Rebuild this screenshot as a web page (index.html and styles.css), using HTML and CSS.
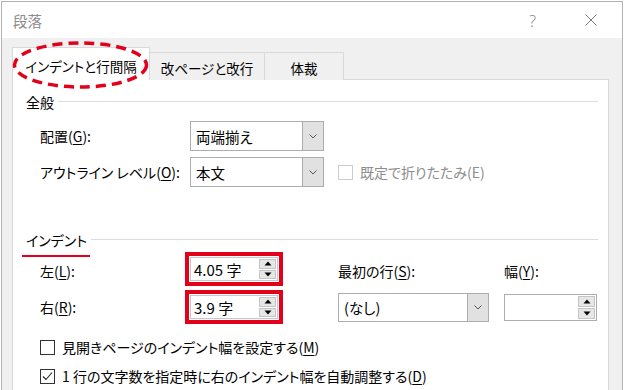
FILE: index.html
```html
<!DOCTYPE html>
<html lang="ja">
<head>
<meta charset="utf-8">
<title>段落</title>
<link rel="stylesheet" href="styles.css">
</head>
<body>
<div class="window">
  <div class="titlebar">
    <span class="title">段落</span>
    <span class="help">?</span>
    <svg class="close" width="12" height="12" viewBox="0 0 12 12"><path d="M0.5 0.5L11.5 11.5M11.5 0.5L0.5 11.5" stroke="#7a7a7a" stroke-width="1" fill="none"/></svg>
  </div>
  <div class="content">
    <div class="tabs">
      <div class="tab active">インデントと行間隔</div>
      <div class="tab t2">改ページと改行</div>
      <div class="tab t3">体裁</div>
    </div>
    <div class="panel">
      <div class="group-head"><span class="gl">全般</span></div>
      <div class="frow r1">
        <span class="lbl">配置(<u>G</u>):</span>
        <div class="combo c1"><span class="ctext">両端揃え</span><span class="cbtn"><svg width="8" height="5" viewBox="0 0 8 5"><path d="M0.5 0.5L4 4L7.5 0.5" stroke="#555" fill="none"/></svg></span></div>
      </div>
      <div class="frow r2">
        <span class="lbl">アウトライン レベル(<u>O</u>):</span>
        <div class="combo c1"><span class="ctext">本文</span><span class="cbtn"><svg width="8" height="5" viewBox="0 0 8 5"><path d="M0.5 0.5L4 4L7.5 0.5" stroke="#555" fill="none"/></svg></span></div>
        <span class="chk disabled"><span class="box"></span><span class="ctl">既定で折りたたみ(E)</span></span>
      </div>

      <div class="group-head g2"><span class="gl ul">インデント</span></div>
      <div class="igrid">
        <span class="lbl l1">左(<u>L</u>):</span>
        <div class="redbox"><div class="spin"><span class="stext">4.05 字</span><span class="sbtns"><span class="sb"><svg width="8" height="5" viewBox="0 0 8 5"><path d="M0.5 4.5L4 0.5L7.5 4.5Z" fill="#000"/></svg></span><span class="sb"><svg width="8" height="5" viewBox="0 0 8 5"><path d="M0.5 0.5L4 4.5L7.5 0.5Z" fill="#000"/></svg></span></span></div></div>
        <span class="lbl l1">最初の行(<u>S</u>):</span>
        <span class="lbl l1">幅(<u>Y</u>):</span>

        <span class="lbl">右(<u>R</u>):</span>
        <div class="redbox"><div class="spin"><span class="stext">3.9 字</span><span class="sbtns"><span class="sb"><svg width="8" height="5" viewBox="0 0 8 5"><path d="M0.5 4.5L4 0.5L7.5 4.5Z" fill="#000"/></svg></span><span class="sb"><svg width="8" height="5" viewBox="0 0 8 5"><path d="M0.5 0.5L4 4.5L7.5 0.5Z" fill="#000"/></svg></span></span></div></div>
        <div class="combo c2"><span class="ctext">(なし)</span><span class="cbtn"><svg width="8" height="5" viewBox="0 0 8 5"><path d="M0.5 0.5L4 4L7.5 0.5" stroke="#555" fill="none"/></svg></span></div>
        <div class="spin sw"><span class="stext"></span><span class="sbtns"><span class="sb"><svg width="8" height="5" viewBox="0 0 8 5"><path d="M0.5 4.5L4 0.5L7.5 4.5Z" fill="#000"/></svg></span><span class="sb"><svg width="8" height="5" viewBox="0 0 8 5"><path d="M0.5 0.5L4 4.5L7.5 0.5Z" fill="#000"/></svg></span></span></div>
      </div>

      <div class="chkrows">
        <span class="chk"><span class="box"></span><span class="ctl">見開きページのインデント幅を設定する(<u>M</u>)</span></span>
        <span class="chk"><span class="box checked"><svg width="13" height="13" viewBox="0 0 13 13"><path d="M2 6.5L5 9.5L11 2.5" stroke="#222" stroke-width="1.1" fill="none"/></svg></span><span class="ctl">1 行の文字数を指定時に右のインデント幅を自動調整する(<u>D</u>)</span></span>
      </div>
    </div>
  </div>
</div>
<svg class="ellipse" width="150" height="56" viewBox="0 0 150 56"><ellipse cx="72.5" cy="27" rx="66" ry="22" fill="none" stroke="#e2001a" stroke-width="3.5" stroke-dasharray="10 6"/></svg>
</body>
</html>
```
FILE: styles.css
```css
html, body {
  margin: 0;
  padding: 0;
}
body {
  width: 625px;
  height: 390px;
  overflow: hidden;
  position: relative;
  background: #fff;
  font-family: "Noto Sans CJK JP", "Noto Sans", sans-serif;
  font-feature-settings: "palt";
  font-size: 14px;
  color: #000;
}
u {
  text-decoration-thickness: 1px;
  text-underline-offset: 2px;
}
.window {
  margin: 1px 0 0 1px;
  width: 620px;
  height: 420px;
  border: 1px solid #b4b4b4;
  border-bottom: none;
  background: #f0f0f0;
}
.titlebar {
  height: 36px;
  background: #fff;
  display: flex;
  align-items: center;
}
.title {
  margin-left: 11px;
  color: #8c8c8c;
  font-size: 14.5px;
  flex: 1;
}
.help {
  font-family: "Noto Sans", sans-serif;
  font-weight: 300;
  color: #8a8a8a;
  font-size: 16px;
  margin-right: 49px;
  margin-top: 1px;
}
.close {
  margin-right: 25px;
  margin-top: -1px;
}
.content {
  padding: 10px 13px 0 10px;
}
.tabs {
  display: flex;
  align-items: flex-end;
  height: 32px;
  position: relative;
  z-index: 1;
  margin-bottom: -1px;
}
.tab {
  box-sizing: border-box;
  height: 28px;
  border: 1px solid #d9d9d9;
  border-bottom: none;
  background: #f0f0f0;
  display: flex;
  align-items: center;
  justify-content: center;
  padding-top: 2px;
  margin-left: -1px;
  font-size: 13.5px;
}
.tab.active {
  height: 33px;
  width: 138px;
  background: #fff;
  margin-left: 0;
  padding-top: 4px;
}
.tab.t2 { width: 116px; }
.tab.t3 { width: 80px; }
.panel {
  background: #fff;
  border: 1px solid #d9d9d9;
  height: 330px;
  padding: 12px 10px 0 13px;
  box-sizing: border-box;
}
.group-head {
  height: 20px;
  line-height: 20px;
  display: flex;
  align-items: center;
  position: relative;
}
.group-head::after {
  content: "";
  flex: 1;
  height: 1px;
  background: #dcdcdc;
  margin-left: 4px;
  margin-top: -2px;
}
.gl { position: relative; }
.gl.ul::after {
  content: "";
  position: absolute;
  left: -4px;
  right: -3px;
  bottom: -7px;
  height: 2px;
  background: #e2001a;
}
.g2 { margin-top: 43px; }
.frow {
  display: flex;
  align-items: center;
  height: 30px;
}
.r1 { margin-top: 9px; }
.r2 { margin-top: 6px; }
.frow .lbl {
  margin-left: 14px;
  width: 150px;
}
.combo {
  box-sizing: border-box;
  display: flex;
  border: 1px solid #adadad;
  background: #fff;
  height: 30px;
}
.combo.c1 { width: 134px; }
.combo.c2 { width: 151px; height: 29px; }
.ctext {
  flex: 1;
  padding-left: 5px;
  display: flex;
  align-items: center;
  font-size: 14.5px;
}
.cbtn {
  width: 20px;
  background: #e1e1e1;
  border-left: 1px solid #adadad;
  display: flex;
  align-items: center;
  justify-content: center;
}
.chk {
  display: flex;
  align-items: center;
}
.r2 .chk { margin-left: 14px; }
.box {
  box-sizing: border-box;
  width: 15px;
  height: 15px;
  border: 1px solid #333;
  background: #fff;
  margin-right: 7px;
  display: flex;
  align-items: center;
  justify-content: center;
}
.chk.disabled .box { border-color: #cccccc; }
.chk.disabled .ctl { color: #8d8d8d; }
.igrid {
  display: grid;
  grid-template-columns: 145px 153px 166px 1fr;
  grid-template-rows: 34px 34px;
  row-gap: 4px;
  margin-top: 2px;
  margin-left: 14px;
  align-items: center;
}
.lbl.l1 { padding-top: 4px; }
.redbox {
  box-sizing: border-box;
  width: 98px;
  height: 34px;
  border: 4px solid #e2001a;
  padding: 1px;
}
.spin {
  box-sizing: border-box;
  height: 100%;
  display: flex;
  border: 1px solid #c8c8c8;
  background: #fff;
}
.spin.sw {
  width: 93px;
  height: 27px;
  border-color: #adadad;
}
.stext {
  flex: 1;
  display: flex;
  align-items: center;
  padding-left: 3px;
  font-size: 15px;
}
.sbtns {
  width: 17px;
  display: flex;
  flex-direction: column;
  padding: 1px 1px 1px 0;
  gap: 1px;
}
.sb {
  flex: 1;
  background: #e6e6e6;
  border: 1px solid #c4c4c4;
  display: flex;
  align-items: center;
  justify-content: center;
}
.chkrows {
  display: flex;
  flex-direction: column;
  gap: 7px;
  margin-top: 12px;
  margin-left: 14px;
}
.chkrows .chk { height: 22px; }
.ellipse {
  position: absolute;
  left: 8px;
  top: 38px;
  z-index: 5;
}
```
